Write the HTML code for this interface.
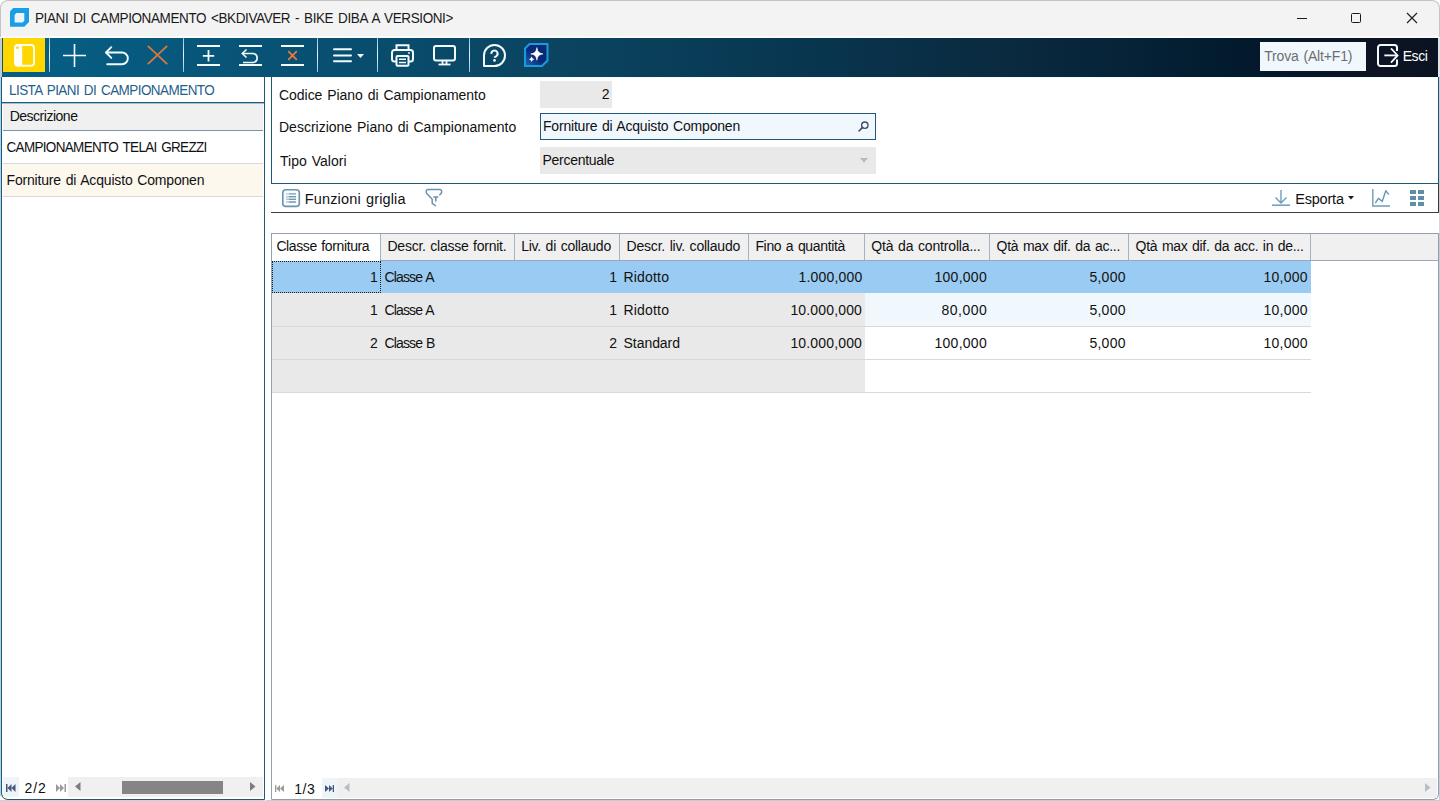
<!DOCTYPE html>
<html><head><meta charset="utf-8"><title>Piani di campionamento</title>
<style>
html,body{margin:0;padding:0;}
body{width:1440px;height:801px;overflow:hidden;position:relative;background:#fff;font-family:"Liberation Sans", sans-serif;}
.a{position:absolute;box-sizing:border-box;}
.t{position:absolute;white-space:nowrap;line-height:1;}
svg{position:absolute;overflow:visible;}
</style></head><body>
<!-- window frame -->
<div class="a" style="left:0;top:0;width:1440px;height:801px;background:#fff;"></div>
<!-- title bar -->
<div class="a" style="left:0;top:0;width:1440px;height:37px;background:#f3f3f3;border:1px solid #c4c4c4;border-bottom:none;border-radius:8px 8px 0 0;"></div>
<div class="a" style="left:1px;top:36px;width:1438px;height:2px;background:#fbfbfb;"></div>
<svg style="left:10px;top:8px" width="20" height="20" viewBox="0 0 20 20">
  <path d="M3.2 0 H19 V14 L14.3 18.8 H0 V3.2 Z" fill="#1a9ee6"/>
  <path d="M6.4 5.1 H14.3 V12.8 L12.6 14.5 H4.6 V6.9 Z" fill="#eef3f7"/>
</svg>
<!-- window controls -->
<div class="a" style="left:1297px;top:17.5px;width:10px;height:1px;background:#1a1a1a;"></div>
<div class="a" style="left:1351px;top:13px;width:10px;height:10px;border:1px solid #1a1a1a;border-radius:1.5px;"></div>
<svg style="left:1407px;top:13px" width="10" height="10" viewBox="0 0 10 10"><path d="M0 0 L10 10 M10 0 L0 10" stroke="#1a1a1a" stroke-width="1.1"/></svg>

<!-- toolbar -->
<div class="a" style="left:0;top:38px;width:2px;height:39px;background:#b9cfdb;"></div>
<div class="a" style="left:2px;top:38px;width:1436px;height:39px;background:linear-gradient(to right,#065e85 0px,#075a7f 133px,#084f71 323px,#0b4460 563px,#083751 783px,#0a2a3f 1003px,#062338 1123px,#021a2d 1233px,#0d1322 1373px,#0b1322 1436px);"></div>
<div class="a" style="left:1438px;top:38px;width:2px;height:39px;background:#dfe3e8;"></div>
<div class="a" style="left:2px;top:38px;width:1px;height:34px;background:#1d4f55;"></div>
<div class="a" style="left:3px;top:38px;width:42px;height:34px;background:#ffd600;"></div>
<svg style="left:14px;top:44px" width="22" height="24" viewBox="0 0 22 24">
  <rect x="1" y="1" width="19" height="20.8" rx="3" fill="none" stroke="#fffde0" stroke-width="2"/>
  <rect x="0.5" y="0.5" width="7.7" height="21.8" rx="2.5" fill="#fffef5"/>
  <circle cx="3.4" cy="3.8" r="1.2" fill="#f2d000"/>
</svg>
<!-- separators -->
<div class="a" style="left:49px;top:38px;width:1px;height:34px;background:linear-gradient(#8fc4e0,#e8f6ff 50%,#8fc4e0);"></div>
<div class="a" style="left:183px;top:38px;width:1px;height:34px;background:linear-gradient(#8fc4e0,#e8f6ff 50%,#8fc4e0);"></div>
<div class="a" style="left:317px;top:38px;width:1px;height:34px;background:linear-gradient(#8fc4e0,#e8f6ff 50%,#8fc4e0);"></div>
<div class="a" style="left:377px;top:38px;width:1px;height:34px;background:linear-gradient(#8fc4e0,#e8f6ff 50%,#8fc4e0);"></div>
<div class="a" style="left:469px;top:38px;width:1px;height:34px;background:linear-gradient(#8fc4e0,#e8f6ff 50%,#8fc4e0);"></div>
<!-- plus -->
<svg style="left:63px;top:44px" width="23" height="23" viewBox="0 0 23 23"><path d="M11.5 0 V23 M0 11.5 H23" stroke="#f4fbff" stroke-width="1.6"/></svg>
<!-- undo -->
<svg style="left:104px;top:46px" width="24" height="19" viewBox="0 0 24 19">
  <path d="M2.2 6.5 H18 A5.85 5.85 0 0 1 18 18.2 H3.2" fill="none" stroke="#f4fbff" stroke-width="1.9" stroke-linecap="round"/>
  <path d="M7.3 1.2 L2 6.5 L7.3 11.9" fill="none" stroke="#f4fbff" stroke-width="1.9" stroke-linecap="round" stroke-linejoin="round"/>
</svg>
<!-- X orange -->
<svg style="left:147px;top:45px" width="21" height="20" viewBox="0 0 21 20"><path d="M0.8 0.8 L20.2 19.2 M20.2 0.8 L0.8 19.2" stroke="#d9793f" stroke-width="1.8"/></svg>
<!-- row insert -->
<svg style="left:197px;top:44px" width="23" height="23" viewBox="0 0 23 23">
  <path d="M0 2 H23 M0 21 H23" stroke="#f4fbff" stroke-width="2"/>
  <path d="M11.5 6 V17.5 M5.8 11.8 H17.2" stroke="#f4fbff" stroke-width="1.8"/>
</svg>
<!-- row undo -->
<svg style="left:239px;top:44px" width="23" height="23" viewBox="0 0 23 23">
  <path d="M0 2 H23 M0 21 H23" stroke="#f4fbff" stroke-width="2"/>
  <path d="M3.5 9.5 H14.5 A4.6 4.6 0 0 1 14.5 18.5 H4" fill="none" stroke="#f4fbff" stroke-width="1.6"/>
  <path d="M7.5 5.5 L3.3 9.5 L7.5 13.5" fill="none" stroke="#f4fbff" stroke-width="1.6"/>
</svg>
<!-- row delete -->
<svg style="left:281px;top:44px" width="23" height="23" viewBox="0 0 23 23">
  <path d="M0 2 H23 M0 21 H23" stroke="#f4fbff" stroke-width="2"/>
  <path d="M7.2 7.2 L15.8 15.8 M15.8 7.2 L7.2 15.8" stroke="#e8793a" stroke-width="1.8"/>
</svg>
<!-- hamburger -->
<svg style="left:333px;top:48px" width="32" height="15" viewBox="0 0 32 15">
  <path d="M1 1.3 H18 M1 7.4 H18 M1 13.3 H18" stroke="#f4fbff" stroke-width="2" stroke-linecap="round"/>
  <path d="M24 6 H31 L27.5 10 Z" fill="#f4fbff"/>
</svg>
<!-- printer -->
<svg style="left:391px;top:44px" width="23" height="23" viewBox="0 0 23 23">
  <path d="M5.5 6 V1.2 H17.5 V6" fill="none" stroke="#f4fbff" stroke-width="2"/>
  <path d="M5 17.5 H3.5 A2.5 2.5 0 0 1 1 15 V8.5 A2.5 2.5 0 0 1 3.5 6 H19.5 A2.5 2.5 0 0 1 22 8.5 V15 A2.5 2.5 0 0 1 19.5 17.5 H18" fill="none" stroke="#f4fbff" stroke-width="2"/>
  <rect x="5.5" y="12" width="12" height="9.8" rx="1" fill="none" stroke="#f4fbff" stroke-width="2"/>
  <path d="M8 15.2 H15 M8 18.5 H15" stroke="#f4fbff" stroke-width="1.5"/>
  <circle cx="18" cy="9" r="0.9" fill="#f4fbff"/>
</svg>
<!-- monitor -->
<svg style="left:433px;top:45px" width="23" height="21" viewBox="0 0 23 21">
  <rect x="1" y="1" width="21" height="14.5" rx="2" fill="none" stroke="#f4fbff" stroke-width="2"/>
  <path d="M9.5 15.5 V19 M13.5 15.5 V19" stroke="#f4fbff" stroke-width="1.8"/>
  <path d="M5.5 19.5 H17.5" stroke="#f4fbff" stroke-width="1.8"/>
</svg>
<!-- help -->
<svg style="left:483px;top:44px" width="23" height="23" viewBox="0 0 23 23">
  <path d="M1 22 V11.5 A10.5 10.5 0 1 1 11.5 22 Z" fill="none" stroke="#f4fbff" stroke-width="2" stroke-linejoin="round"/>
  <path d="M8.4 9.9 A3.1 3.1 0 1 1 13.1 12.3 C12.1 12.8 11.6 13.1 11.6 13.8" fill="none" stroke="#f4fbff" stroke-width="2"/>
  <circle cx="11.5" cy="16.4" r="1.3" fill="#f4fbff"/>
</svg>
<!-- AI sparkle -->
<svg style="left:524px;top:43px" width="25" height="24" viewBox="0 0 25 24">
  <defs><linearGradient id="aig" x1="1" y1="0" x2="0" y2="1"><stop offset="0" stop-color="#0c2a72"/><stop offset="0.55" stop-color="#0a2a78"/><stop offset="1" stop-color="#1b68b8"/></linearGradient></defs>
  <path d="M5.5 1 H23.5 V17.5 L18 23 H1 V5.5 Z" fill="url(#aig)" stroke="#1b9ae0" stroke-width="2"/>
  <path d="M12.9 4.6 C13.6 8.6 14.6 10.1 19 10.9 C14.6 11.7 13.6 13.2 12.9 17.2 C12.2 13.2 11.2 11.7 6.8 10.9 C11.2 10.1 12.2 8.6 12.9 4.6 Z" fill="#fff" stroke="#fff" stroke-width="0.6" stroke-linejoin="round"/>
  <path d="M7.6 13.4 Q8.1 15.7 10.3 16.2 Q8.1 16.7 7.6 19 Q7.1 16.7 4.9 16.2 Q7.1 15.7 7.6 13.4 Z" fill="#fff"/>
</svg>
<!-- Trova -->
<div class="a" style="left:1260px;top:42px;width:106px;height:29px;background:#f0f8fe;"></div>
<!-- Esci icon -->
<svg style="left:1377px;top:44px" width="22" height="23" viewBox="0 0 22 23">
  <path d="M20 7 V3.5 A2.5 2.5 0 0 0 17.5 1 H3.5 A2.5 2.5 0 0 0 1 3.5 V19.5 A2.5 2.5 0 0 0 3.5 22 H17.5 A2.5 2.5 0 0 0 20 19.5 V15.5" fill="none" stroke="#f4fbff" stroke-width="2"/>
  <path d="M7.3 11.4 H20" stroke="#f4fbff" stroke-width="1.8"/>
  <path d="M14 4.3 L20.6 11.4 L14 18.6" fill="none" stroke="#f4fbff" stroke-width="1.8"/>
</svg>

<!-- ===== LEFT PANEL ===== -->
<div class="a" style="left:0;top:77px;width:1px;height:719px;background:#a8d4ee;"></div>
<div class="a" style="left:0;top:800px;width:266px;height:1px;background:#c6d3db;"></div>
<div class="a" style="left:1px;top:77px;width:264px;height:723px;border:1px solid #255a74;border-top:none;border-bottom-color:#2e5468;border-radius:0 0 0 7px;background:#fff;"></div>
<div class="a" style="left:2px;top:102px;width:262px;height:1px;background:#1f5878;"></div>
<div class="a" style="left:3px;top:103px;width:260px;height:27px;background:#f0f0f0;"></div>
<div class="a" style="left:2px;top:103px;width:262px;height:1px;background:#9fc0d6;"></div>
<div class="a" style="left:3px;top:130px;width:260px;height:1px;background:#7f93a8;"></div>
<div class="a" style="left:3px;top:163px;width:260px;height:1px;background:#d8d8d8;"></div>
<div class="a" style="left:3px;top:164px;width:260px;height:32px;background:#fdf8ee;"></div>
<div class="a" style="left:3px;top:196px;width:260px;height:1px;background:#d8d8d8;"></div>
<!-- left nav -->
<div class="a" style="left:3px;top:777px;width:16px;height:20px;background:#eef5fa;"></div>
<svg style="left:6px;top:784px" width="10" height="8" viewBox="0 0 10 8"><path d="M0 0 H1.5 V8 H0 Z M1.5 4 L5.5 0 V8 Z M5.5 4 L9.5 0 V8 Z" fill="#46587a"/></svg>
<svg style="left:56px;top:784px" width="10" height="8" viewBox="0 0 10 8"><path d="M0 0 L4 4 L0 8 Z M4 0 L8 4 L4 8 Z M8.5 0 H10 V8 H8.5 Z" fill="#9a9a9a"/></svg>
<div class="a" style="left:68px;top:777px;width:195px;height:20px;background:#f0f0f0;"></div>
<svg style="left:75px;top:782px" width="6" height="9" viewBox="0 0 6 9"><path d="M5.5 0 V9 L0 4.5 Z" fill="#7d7d7d"/></svg>
<div class="a" style="left:122px;top:781px;width:101px;height:13px;background:#858585;"></div>
<svg style="left:250px;top:782px" width="6" height="9" viewBox="0 0 6 9"><path d="M0 0 V9 L5.5 4.5 Z" fill="#7d7d7d"/></svg>

<!-- ===== RIGHT PANEL ===== -->
<div class="a" style="left:265px;top:77px;width:6px;height:724px;background:#fff;"></div>
<!-- form box -->
<div class="a" style="left:271px;top:77px;width:1168px;height:107px;border:1px solid #1f5878;border-top:none;background:#fff;"></div>
<div class="a" style="left:272px;top:77px;width:1166px;height:1px;background:#effcfd;"></div>
<div class="a" style="left:540px;top:81px;width:72px;height:27px;background:#e9e9e9;"></div>
<div class="a" style="left:540px;top:113px;width:336px;height:27px;background:#f0f8fe;border:1px solid #1f5878;"></div>
<svg style="left:858px;top:121px" width="11" height="11" viewBox="0 0 11 11"><circle cx="6.8" cy="4.2" r="3.2" fill="none" stroke="#3c4c66" stroke-width="1.3"/><path d="M4.6 6.4 L1 10" stroke="#3c4c66" stroke-width="1.6" stroke-linecap="round"/></svg>
<div class="a" style="left:540px;top:147px;width:336px;height:27px;background:#e9e9e9;"></div>
<svg style="left:860px;top:158px" width="8" height="5" viewBox="0 0 8 5"><path d="M0 0 H8 L4 4.5 Z" fill="#b4b9c6"/></svg>
<!-- grid toolbar -->
<div class="a" style="left:1438px;top:184px;width:1px;height:29px;background:#3a3a3a;"></div>
<div class="a" style="left:271px;top:212px;width:1168px;height:1px;background:#3f3f3f;"></div>
<svg style="left:282px;top:189px" width="18" height="18" viewBox="0 0 18 18">
  <rect x="0.8" y="0.8" width="16.5" height="16.6" rx="3" fill="#fafdff" stroke="#6b93ab" stroke-width="1.6"/>
  <rect x="4" y="8.3" width="10" height="1.5" fill="#bfe3f5"/>
  <path d="M7 4.9 H14 M7 7.6 H14 M7 10.4 H14 M7 13 H14" stroke="#7b97aa" stroke-width="1.4"/>
  <path d="M4 4.9 H7 M4 7.6 H7 M4 10.4 H7 M4 13 H7" stroke="#b9c9d3" stroke-width="1.4"/>
</svg>
<svg style="left:425px;top:188px" width="18" height="19" viewBox="0 0 18 19">
  <path d="M14.4 7.3 L16 5.6 Q16.6 5 16.6 4 V3.3 Q16.6 1.5 14.8 1.5 H3 Q1.25 1.5 1.25 3.3 V4 Q1.25 5 2 5.8 L7.2 11.2 V15.4 L11 18" fill="none" stroke="#6b93ab" stroke-width="1.5" stroke-linejoin="round"/>
  <path d="M8.3 9 H13.3 M10.8 9 V13.6" stroke="#6b93ab" stroke-width="1.6"/>
</svg>
<svg style="left:1272px;top:190px" width="18" height="16" viewBox="0 0 18 16">
  <path d="M9 0 V13 M3.5 7.5 L9 13 L14.5 7.5" fill="none" stroke="#6f9cb8" stroke-width="1.4"/>
  <path d="M0 15.2 H18" stroke="#6f9cb8" stroke-width="1.5"/>
</svg>
<svg style="left:1348px;top:196px" width="6" height="4" viewBox="0 0 6 4"><path d="M0 0 H6 L3 3.5 Z" fill="#1a1a1a"/></svg>
<svg style="left:1372px;top:189px" width="19" height="18" viewBox="0 0 19 18">
  <path d="M0.8 0 V17 H18" fill="none" stroke="#6f9cb8" stroke-width="1.4"/>
  <path d="M3.3 14.2 L6.4 9.3 L10.2 12.4 L13.8 1.8 L16.9 5.6" fill="none" stroke="#6a96b0" stroke-width="1.4" stroke-linejoin="round"/>
</svg>
<svg style="left:1410px;top:190px" width="14" height="16" viewBox="0 0 14 16">
  <path d="M0 0 H6 V4 H0 Z M8 0 H14 V4 H8 Z M0 6 H6 V10 H0 Z M8 6 H14 V10 H8 Z M0 12 H6 V16 H0 Z M8 12 H14 V16 H8 Z" fill="#5f8fa8"/>
</svg>
<!-- grid frame -->
<div class="a" style="left:266px;top:800px;width:1174px;height:1px;background:#c9cdd2;"></div>
<div class="a" style="left:271px;top:233px;width:1168px;height:567px;border:1px solid #93a0b0;border-bottom-color:#939ba8;border-radius:0 0 6px 0;background:#fff;"></div>
<!-- header -->
<div class="a" style="left:380px;top:234px;width:1058px;height:26px;background:#f0f0f0;"></div>
<div class="a" style="left:380px;top:260px;width:1058px;height:1px;background:#9aa8ba;"></div>
<div class="a" style="left:380px;top:234px;width:1px;height:26px;background:#a5b2c2;"></div>
<div class="a" style="left:514px;top:234px;width:1px;height:26px;background:#a5b2c2;"></div>
<div class="a" style="left:619px;top:234px;width:1px;height:26px;background:#a5b2c2;"></div>
<div class="a" style="left:748px;top:234px;width:1px;height:26px;background:#a5b2c2;"></div>
<div class="a" style="left:864px;top:234px;width:1px;height:26px;background:#a5b2c2;"></div>
<div class="a" style="left:989px;top:234px;width:1px;height:26px;background:#a5b2c2;"></div>
<div class="a" style="left:1128px;top:234px;width:1px;height:26px;background:#a5b2c2;"></div>
<div class="a" style="left:1310px;top:234px;width:1px;height:26px;background:#a5b2c2;"></div>
<!-- rows -->
<div class="a" style="left:272px;top:261px;width:1039px;height:32px;background:#9acbf2;"></div>
<div class="a" style="left:272px;top:261px;width:109px;height:32px;border:1px dotted #1a1a1a;"></div>
<div class="a" style="left:272px;top:293px;width:593px;height:99px;background:#e9e9e9;"></div>
<div class="a" style="left:865px;top:293px;width:446px;height:33px;background:#f0f8fe;"></div>
<div class="a" style="left:272px;top:326px;width:1039px;height:1px;background:#d9d9d9;"></div>
<div class="a" style="left:272px;top:359px;width:1039px;height:1px;background:#d9d9d9;"></div>
<div class="a" style="left:272px;top:392px;width:1039px;height:1px;background:#d9d9d9;"></div>
<!-- grid nav -->
<svg style="left:275px;top:785px" width="9" height="7" viewBox="0 0 9 7"><path d="M0 0 H1.3 V7 H0 Z M1.3 3.5 L5 0 V7 Z M5 3.5 L9 0 V7 Z" fill="#9a9a9a"/></svg>
<div class="a" style="left:322px;top:778px;width:15px;height:20px;background:#eef5fa;"></div>
<svg style="left:325px;top:785px" width="9" height="7" viewBox="0 0 9 7"><path d="M0 0 L4 3.5 L0 7 Z M4 0 L7.7 3.5 L4 7 Z M7.7 0 H9 V7 H7.7 Z" fill="#46587a"/></svg>
<div class="a" style="left:337px;top:778px;width:1100px;height:20px;background:#f0f0f0;"></div>
<svg style="left:344px;top:783px" width="6" height="9" viewBox="0 0 6 9"><path d="M5.5 0 V9 L0 4.5 Z" fill="#b9bdc8"/></svg>
<svg style="left:1425px;top:783px" width="6" height="9" viewBox="0 0 6 9"><path d="M0 0 V9 L5.5 4.5 Z" fill="#b9bdc8"/></svg>
<div class="a" style="left:1439px;top:77px;width:1px;height:724px;background:#c3ccd8;"></div>
<div class="a" style="left:1439px;top:213px;width:1px;height:20px;background:#d3d6da;"></div>
<span class="t" style="top:11.57px;font-size:13.5px;color:#1a1a1a;letter-spacing:-0.393px;word-spacing:1.5px;transform:scaleY(1.08);transform-origin:0 11.43px;left:35.00px;">PIANI DI CAMPIONAMENTO &lt;BKDIVAVER - BIKE DIBA A VERSIONI&gt;</span>
<span class="t" style="top:48.95px;font-size:14px;color:#6e6e6e;letter-spacing:-0.154px;word-spacing:1.0px;transform:scaleY(1.05);transform-origin:0 11.85px;left:1264.20px;">Trova (Alt+F1)</span>
<span class="t" style="top:48.95px;font-size:14px;color:#ffffff;letter-spacing:-0.433px;transform:scaleY(1.08);transform-origin:0 11.85px;left:1402.70px;">Esci</span>
<span class="t" style="top:84.27px;font-size:13.5px;color:#1f5f8c;letter-spacing:-0.556px;word-spacing:1.5px;transform:scaleY(1.07);transform-origin:0 11.43px;left:9.00px;">LISTA PIANI DI CAMPIONAMENTO</span>
<span class="t" style="top:109.15px;font-size:14px;color:#111;letter-spacing:-0.490px;left:9.70px;">Descrizione</span>
<span class="t" style="top:140.57px;font-size:13.5px;color:#111;letter-spacing:-0.680px;word-spacing:1.5px;transform:scaleY(1.07);transform-origin:0 11.43px;left:6.50px;">CAMPIONAMENTO TELAI GREZZI</span>
<span class="t" style="top:173.15px;font-size:14px;color:#111;letter-spacing:-0.172px;word-spacing:1.0px;left:6.50px;">Forniture di Acquisto Componen</span>
<span class="t" style="top:780.90px;font-size:14px;color:#111;letter-spacing:0.850px;left:24.60px;">2/2</span>
<span class="t" style="top:87.90px;font-size:14px;color:#111;letter-spacing:-0.036px;word-spacing:1.0px;left:279.00px;">Codice Piano di Campionamento</span>
<span class="t" style="top:119.75px;font-size:14px;color:#111;word-spacing:1.0px;left:279.00px;">Descrizione Piano di Campionamento</span>
<span class="t" style="top:153.95px;font-size:14px;color:#111;letter-spacing:0.025px;word-spacing:1.0px;left:280.00px;">Tipo Valori</span>
<span class="t" style="top:87.05px;font-size:14px;color:#111;left:601.75px;">2</span>
<span class="t" style="top:119.15px;font-size:14px;color:#111;letter-spacing:-0.200px;word-spacing:1.0px;left:543.00px;">Forniture di Acquisto Componen</span>
<span class="t" style="top:152.90px;font-size:14px;color:#111;letter-spacing:-0.275px;left:542.50px;">Percentuale</span>
<span class="t" style="top:191.52px;font-size:14.5px;color:#111;letter-spacing:0.147px;word-spacing:1.0px;transform:scaleY(1.04);transform-origin:0 12.28px;left:304.80px;">Funzioni griglia</span>
<span class="t" style="top:191.52px;font-size:14.5px;color:#111;letter-spacing:-0.208px;transform:scaleY(1.04);transform-origin:0 12.28px;left:1295.25px;">Esporta</span>
<span class="t" style="top:238.95px;font-size:14px;color:#111;letter-spacing:-0.387px;word-spacing:1.0px;left:276.40px;">Classe fornitura</span>
<span class="t" style="top:238.95px;font-size:14px;color:#111;letter-spacing:-0.255px;word-spacing:1.0px;left:387.50px;">Descr. classe fornit.</span>
<span class="t" style="top:238.95px;font-size:14px;color:#111;letter-spacing:-0.240px;word-spacing:1.0px;left:521.20px;">Liv. di collaudo</span>
<span class="t" style="top:238.95px;font-size:14px;color:#111;letter-spacing:-0.211px;word-spacing:1.0px;left:626.60px;">Descr. liv. collaudo</span>
<span class="t" style="top:238.95px;font-size:14px;color:#111;letter-spacing:-0.329px;word-spacing:1.0px;left:755.40px;">Fino a quantità</span>
<span class="t" style="top:238.95px;font-size:14px;color:#111;letter-spacing:-0.172px;word-spacing:1.0px;left:871.30px;">Qtà da controlla...</span>
<span class="t" style="top:238.95px;font-size:14px;color:#111;letter-spacing:-0.280px;word-spacing:1.0px;left:996.60px;">Qtà max dif. da ac...</span>
<span class="t" style="top:238.95px;font-size:14px;color:#111;letter-spacing:-0.293px;word-spacing:1.0px;left:1135.60px;">Qtà max dif. da acc. in de...</span>
<span class="t" style="top:270.15px;font-size:14px;color:#111;left:370.00px;">1</span>
<span class="t" style="top:270.15px;font-size:14px;color:#111;letter-spacing:-0.871px;word-spacing:1.0px;left:384.50px;">Classe A</span>
<span class="t" style="top:270.15px;font-size:14px;color:#111;left:609.20px;">1</span>
<span class="t" style="top:270.15px;font-size:14px;color:#111;letter-spacing:0.183px;left:623.50px;">Ridotto</span>
<span class="t" style="top:270.15px;font-size:14px;color:#111;letter-spacing:0.200px;left:798.40px;">1.000,000</span>
<span class="t" style="top:270.15px;font-size:14px;color:#111;letter-spacing:0.267px;left:934.50px;">100,000</span>
<span class="t" style="top:270.15px;font-size:14px;color:#111;letter-spacing:0.275px;left:1089.40px;">5,000</span>
<span class="t" style="top:270.15px;font-size:14px;color:#111;letter-spacing:0.280px;left:1263.40px;">10,000</span>
<span class="t" style="top:303.15px;font-size:14px;color:#111;left:370.00px;">1</span>
<span class="t" style="top:303.15px;font-size:14px;color:#111;letter-spacing:-0.871px;word-spacing:1.0px;left:384.50px;">Classe A</span>
<span class="t" style="top:303.15px;font-size:14px;color:#111;left:609.20px;">1</span>
<span class="t" style="top:303.15px;font-size:14px;color:#111;letter-spacing:0.183px;left:623.50px;">Ridotto</span>
<span class="t" style="top:303.15px;font-size:14px;color:#111;letter-spacing:0.156px;left:790.40px;">10.000,000</span>
<span class="t" style="top:303.15px;font-size:14px;color:#111;letter-spacing:0.480px;left:941.50px;">80,000</span>
<span class="t" style="top:303.15px;font-size:14px;color:#111;letter-spacing:0.275px;left:1089.40px;">5,000</span>
<span class="t" style="top:303.15px;font-size:14px;color:#111;letter-spacing:0.280px;left:1263.40px;">10,000</span>
<span class="t" style="top:336.15px;font-size:14px;color:#111;left:370.00px;">2</span>
<span class="t" style="top:336.15px;font-size:14px;color:#111;letter-spacing:-0.871px;word-spacing:1.0px;left:384.50px;">Classe B</span>
<span class="t" style="top:336.15px;font-size:14px;color:#111;left:609.20px;">2</span>
<span class="t" style="top:336.15px;font-size:14px;color:#111;letter-spacing:-0.043px;left:623.50px;">Standard</span>
<span class="t" style="top:336.15px;font-size:14px;color:#111;letter-spacing:0.156px;left:790.40px;">10.000,000</span>
<span class="t" style="top:336.15px;font-size:14px;color:#111;letter-spacing:0.267px;left:934.50px;">100,000</span>
<span class="t" style="top:336.15px;font-size:14px;color:#111;letter-spacing:0.275px;left:1089.40px;">5,000</span>
<span class="t" style="top:336.15px;font-size:14px;color:#111;letter-spacing:0.280px;left:1263.40px;">10,000</span>
<span class="t" style="top:781.95px;font-size:14px;color:#111;letter-spacing:0.600px;left:294.20px;">1/3</span>
</body></html>
